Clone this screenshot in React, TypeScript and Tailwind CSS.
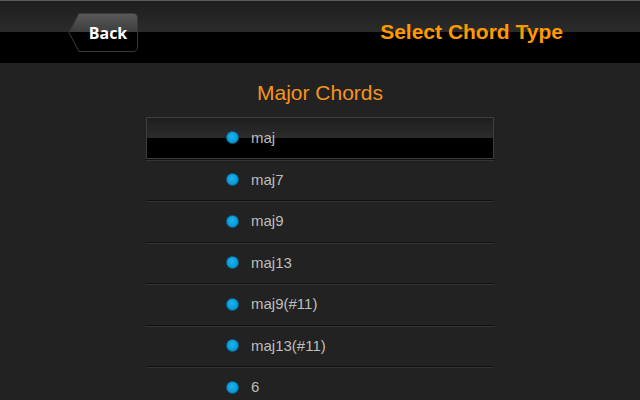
import React from "react";

const chords = ["maj", "maj7", "maj9", "maj13", "maj9(#11)", "maj13(#11)", "6"];

function BackButton() {
  return (
    <button className="relative flex h-[39px] w-[70px] items-center justify-center pl-[10px] pt-[1px]">
      {/* arrow shaped glossy background */}
      <svg className="absolute inset-0" width="70" height="39" viewBox="0 0 70 39">
        <defs>
          <linearGradient id="bk" x1="0" y1="0" x2="0" y2="1">
            <stop offset="0" stopColor="#5a5a5a" />
            <stop offset="0.5" stopColor="#3c3c3c" />
            <stop offset="0.5" stopColor="#000" />
            <stop offset="1" stopColor="#000" />
          </linearGradient>
        </defs>
        <path
          d="M1 19.5 L11 0.5 H65 Q69.5 0.5 69.5 5 V34 Q69.5 38.5 65 38.5 H11 Z"
          fill="url(#bk)"
          stroke="#3a3a3a"
        />
      </svg>
      <span className="relative text-[16px] font-bold text-white [font-family:'Open_Sans',sans-serif]">
        Back
      </span>
    </button>
  );
}

export default function App() {
  return (
    <div className="h-[400px] w-[640px] overflow-hidden bg-[#222222] [font-family:'Liberation_Sans',Arial,sans-serif]">
      <header className="relative flex h-[63px] items-center justify-between border-t border-[#5a5a5a] bg-[linear-gradient(to_bottom,#1e1e1e_0%,#2b2b2b_50%,#000_50%,#000_100%)] pl-[68px] pr-[77px]">
        <BackButton />
        <h1 className="text-[21px] font-bold text-[#ff9900]">Select Chord Type</h1>
      </header>

      <h2 className="mt-[16px] text-center text-[21px] leading-[27px] text-[#f7931e]">
        Major Chords
      </h2>

      <ul className="mx-auto mt-[11px] w-[348px]">
        {chords.map((c, i) => (
          <li
            key={c}
            className={
              i === 0
                ? "flex h-[41.5px] items-center border border-[#3e3e3e] bg-[linear-gradient(to_bottom,#1e1e1e_0%,#2c2c2c_50%,#000_50%,#000_100%)] pl-[79px]"
                : "flex h-[41.5px] items-center border-t border-[#101010] pl-[80px] shadow-[inset_0_1px_0_#333]"
            }
          >
            <span className="h-[13px] w-[13px] rounded-full border border-[#086591] bg-[radial-gradient(circle_at_45%_40%,#19b6ef_0%,#0b9ad6_60%,#0680b8_100%)]" />
            <span className="ml-[12px] text-[15px] text-[#bdbdbd]">{c}</span>
          </li>
        ))}
      </ul>
    </div>
  );
}
